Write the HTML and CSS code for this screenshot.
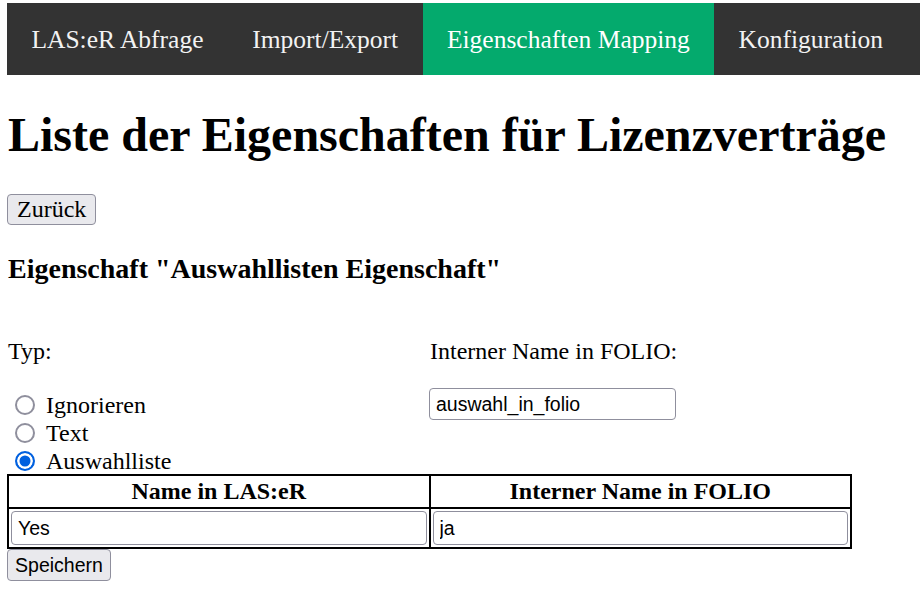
FILE: index.html
```html
<!DOCTYPE html>
<html lang="de">
<head>
<meta charset="utf-8">
<title>Eigenschaften Mapping</title>
<link rel="stylesheet" href="styles.css">
</head>
<body>
<nav class="topnav">
  <a href="#" class="nav-link">LAS:eR Abfrage</a>
  <a href="#" class="nav-link">Import/Export</a>
  <a href="#" class="nav-link active">Eigenschaften Mapping</a>
  <a href="#" class="nav-link">Konfiguration</a>
</nav>
<h1 class="title">Liste der Eigenschaften für Lizenzverträge</h1>
<button class="btn-back" type="button">Zurück</button>
<h3 class="subtitle">Eigenschaft "Auswahllisten Eigenschaft"</h3>
<form class="mapping-form">
  <div class="settings">
    <div class="col">
      <div class="label">Typ:</div>
      <div class="radios">
        <label class="radio-row"><input type="radio" name="typ" class="radio">Ignorieren</label>
        <label class="radio-row"><input type="radio" name="typ" class="radio">Text</label>
        <label class="radio-row"><input type="radio" name="typ" class="radio" checked>Auswahlliste</label>
      </div>
    </div>
    <div class="col">
      <div class="label">Interner Name in FOLIO:</div>
      <input type="text" class="text-input folio-name" value="auswahl_in_folio">
    </div>
  </div>
  <table class="map-table">
    <thead>
      <tr><th>Name in LAS:eR</th><th>Interner Name in FOLIO</th></tr>
    </thead>
    <tbody>
      <tr>
        <td><input type="text" class="text-input cell-input" value="Yes"></td>
        <td><input type="text" class="text-input cell-input" value="ja"></td>
      </tr>
    </tbody>
  </table>
  <button class="btn-save" type="button">Speichern</button>
</form>
</body>
</html>
```

FILE: styles.css
```css
html, body {
  background: #ffffff;
}
body {
  margin: 3px 0 0 7px;
  font-family: "Liberation Serif", "Times New Roman", serif;
  font-size: 24px;
  color: #000;
}
.topnav {
  display: flex;
  background: #333333;
}
.nav-link {
  display: block;
  padding: 22px 24.4px 20px;
  font-size: 25.5px;
  color: #f2f2f2;
  text-decoration: none;
  line-height: 30px;
  height: 30px;
}
.nav-link.active {
  background: #04aa6d;
  color: #ffffff;
}
.title {
  font-size: 48px;
  font-weight: bold;
  margin: 32px 0 32px 1px;
  line-height: 55px;
}
.btn-back {
  font-family: "Liberation Serif", "Times New Roman", serif;
  font-size: 24px;
  background: #e9e9ed;
  border: 1px solid #8f8f9d;
  border-radius: 4px;
  padding: 0 9px;
  height: 31px;
  color: #000;
  margin: 0;
}
.subtitle {
  font-size: 28px;
  font-weight: bold;
  margin: 28px 0 27px 1px;
  line-height: 31px;
}
.settings {
  display: grid;
  grid-template-columns: 422px 1fr;
  margin-top: 54px;
}
.label {
  line-height: 27px;
  margin-left: 1px;
}
.radios {
  margin-top: 26px;
  display: flex;
  flex-direction: column;
}
.radio-row {
  display: flex;
  align-items: center;
  height: 28px;
}
.radio {
  appearance: none;
  -webkit-appearance: none;
  width: 20px;
  height: 20px;
  margin: 0 11px 0 8px;
  border: 2.5px solid #8f8f9d;
  border-radius: 50%;
  background: #fff;
  box-sizing: border-box;
}
.radio:checked {
  border: 2.5px solid #0060df;
  background: #0060df;
  box-shadow: inset 0 0 0 2.5px #ffffff;
}
.text-input {
  font-family: "Liberation Sans", Arial, sans-serif;
  font-size: 19.5px;
  border: 1px solid #8f8f9d;
  border-radius: 4px;
  background: #fff;
  color: #000;
  box-sizing: border-box;
  padding: 0 6px;
  margin: 0;
}
.folio-name {
  width: 247px;
  height: 32px;
  margin-top: 23px;
}
.map-table {
  width: 845px;
  table-layout: fixed;
  border-collapse: collapse;
  margin-top: -1px;
}
.map-table th,
.map-table td {
  border: 2px solid #000;
  padding: 2px 2px;
}
.map-table th {
  font-size: 24px;
  font-weight: bold;
  line-height: 27px;
  text-align: center;
}
.cell-input {
  display: block;
  width: 100%;
  height: 34px;
}
.btn-save {
  font-family: "Liberation Sans", Arial, sans-serif;
  font-size: 19.5px;
  background: #e9e9ed;
  border: 1px solid #8f8f9d;
  border-radius: 4px;
  padding: 0 7px;
  height: 32px;
  width: 104px;
  color: #000;
  margin: 0;
}
```
